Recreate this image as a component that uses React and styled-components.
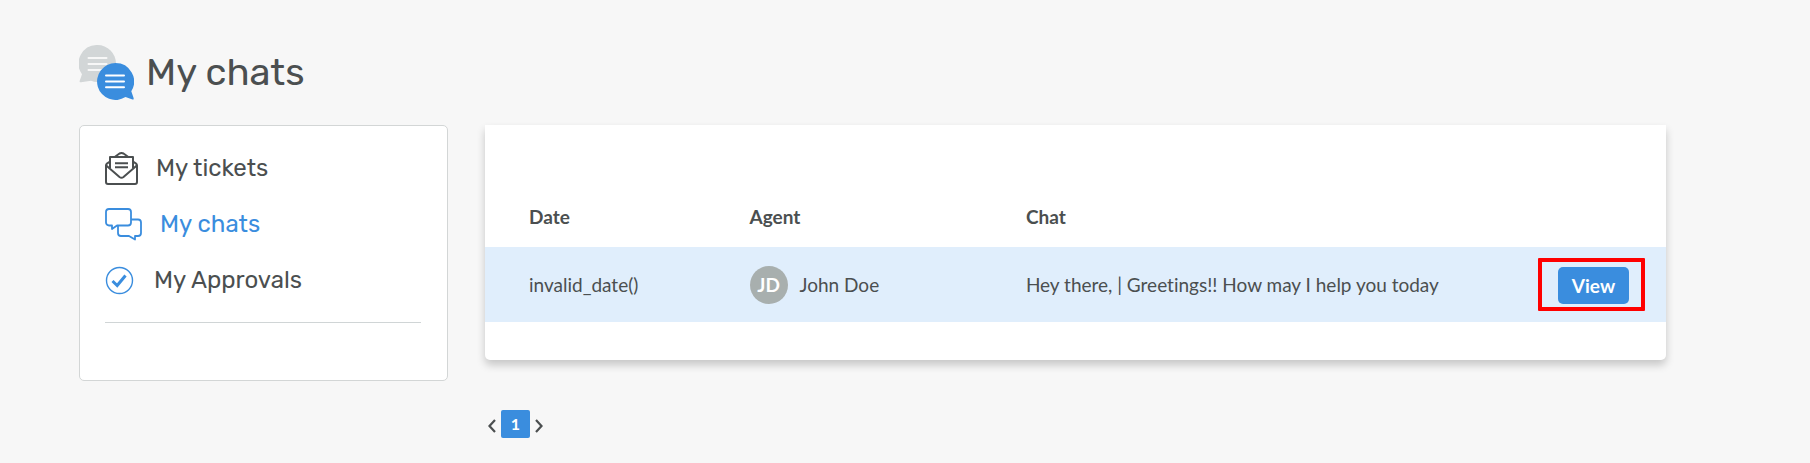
import React from "react";
import styled, { createGlobalStyle } from "styled-components";

const ink = "#4b4f50";
const blue = "#3a8dde";

const GlobalStyle = createGlobalStyle`
  *, *::before, *::after { box-sizing: border-box; }
  body {
    margin: 0;
    background: #f7f7f7;
    color: ${ink};
    font-family: Lato, sans-serif;
    font-size: 19px;
    line-height: 24px;
    font-variant-ligatures: none;
  }
`;

const Page = styled.div`
  padding: 45px 144px 24px 79px;
`;

const PageHeader = styled.header`
  display: flex;
  align-items: center;
  gap: 12px;
  margin-bottom: 25px;
`;

const Title = styled.h1`
  margin: 0;
  font: 400 38px/55px Rubik, Inter, sans-serif;
`;

const Columns = styled.div`
  display: grid;
  grid-template-columns: 369px minmax(0, 1fr);
  gap: 37px;
  align-items: start;
`;

const Sidebar = styled.nav`
  padding: 14px 26px 57px 25px;
  background: #fff;
  border: 1px solid #d3d6d6;
  border-radius: 5px;
`;

const Menu = styled.ul`
  margin: 0;
  padding: 0 0 14px;
  list-style: none;
  border-bottom: 1px solid #d0d5d6;
`;

const MenuLink = styled.a`
  display: flex;
  align-items: center;
  gap: 18px;
  height: 56px;
  color: ${(p) => (p.$active ? blue : ink)};
  font: 400 24px/28px Rubik, Inter, sans-serif;
  text-decoration: none;
`;

const Panel = styled.section`
  padding: 65px 0 38px;
  background: #fff;
  border-radius: 0 0 5px 5px;
  box-shadow: 0 5px 8px rgba(0, 0, 0, 0.2);
`;

const Table = styled.table`
  width: 100%;
  table-layout: fixed;
  border-collapse: collapse;
  text-align: left;
`;

const Head = styled.th`
  height: 57px;
  width: ${(p) => p.$width || "auto"};
  padding: 0 0 3px;
  font-weight: 700;

  &:first-child { padding-left: 44px; }
`;

const Row = styled.tr`
  background: #e0eefc;
`;

const Cell = styled.td`
  height: 75px;
  padding: 0;

  &:first-child { padding-left: 44px; }
`;

const ActionCell = styled(Cell)`
  padding: 2px 37px 0 0;
  text-align: right;
`;

const Agent = styled.div`
  display: flex;
  align-items: center;
  gap: 12px;
`;

const Avatar = styled.span`
  display: grid;
  place-items: center;
  width: 38px;
  height: 38px;
  border-radius: 50%;
  background: #a8afae;
  color: #fff;
  font-weight: 700;
`;

const Highlight = styled.span`
  position: relative;
  display: inline-block;
  vertical-align: middle;

  &::after {
    content: "";
    position: absolute;
    inset: -9px -16px -7px -20px;
    border: 4px solid #f00;
    border-radius: 1px;
    pointer-events: none;
  }
`;

const ViewButton = styled.button`
  display: block;
  width: 71px;
  height: 37px;
  padding: 0;
  border: 0;
  border-radius: 5px;
  background: ${blue};
  color: #fff;
  font: 700 19px/24px Lato, sans-serif;
`;

const Pagination = styled.nav`
  display: flex;
  align-items: center;
  gap: 5px;
  margin-top: 50px;
  padding-left: 3px;
`;

const Arrow = styled.button`
  display: flex;
  padding: 4px 0 0;
  border: 0;
  background: none;
  color: ${ink};
`;

const PageNumber = styled.button`
  width: 29px;
  height: 28px;
  padding: 0;
  border: 0;
  border-radius: 2px;
  background: ${blue};
  color: #fff;
  font: 700 16px/20px Lato, sans-serif;
`;

function HeaderIcon() {
  return (
    <svg width="55" height="55" viewBox="0 0 55 55" aria-hidden="true">
      <path
        d="M18.500 0a18.500 18.500 0 1 1 0 37q-3.500 0-6.500-1.200L2 37.300Q0 37.300 .8 35.500L3 29.200A18.500 18.500 0 0 1 18.500 0Z"
        fill="#d2d6d7"
      />
      <path d="M9.500 13h18M9.500 19h18M9.500 25h18" stroke="#f7f7f7" strokeWidth="2" strokeLinecap="round" />
      <path
        d="M36.500 18a18.500 18.500 0 0 1 15.800 28.200L54.600 53Q55 55 53.500 54.500L46.500 52.100A18.500 18.500 0 1 1 36.500 18Z"
        fill={blue}
      />
      <path d="M27 30.500h18M27 36.500h18M27 42.300h18" stroke="#fff" strokeWidth="2" strokeLinecap="round" />
    </svg>
  );
}

function TicketIcon() {
  return (
    <svg width="33" height="33" viewBox="0 0 33 33" fill="none" stroke="currentColor" strokeWidth="2" strokeLinejoin="round" aria-hidden="true">
      <path d="M5 9.500 1.900 11.600Q1 12.300 1 13.500V30a2 2 0 0 0 2 2h27a2 2 0 0 0 2-2V13.500q0-1.200-.9-1.900L28 9.500" />
      <path d="M5 16V5h23v11M10 4.800l4.500-3.300q2-1 4 0L23 4.800" />
      <path d="M1.200 13.500 14.500 25q2 1.500 4 0L31.800 13.500" />
      <path d="M10 11.300h13M10 15.300h13" />
    </svg>
  );
}

function ChatIcon() {
  return (
    <svg width="37" height="33" viewBox="0 0 37 33" fill="none" stroke="currentColor" strokeWidth="1.800" strokeLinejoin="round" aria-hidden="true">
      <path d="M4 1h19a3 3 0 0 1 3 3v10.500a3 3 0 0 1-3 3H12L7 21v-3.500H4a3 3 0 0 1-3-3V4a3 3 0 0 1 3-3Z" />
      <path d="M26 11.500h7a3 3 0 0 1 3 3V25a3 3 0 0 1-3 3h-3v3.500L24 28h-8a3 3 0 0 1-3-3v-7.500" />
    </svg>
  );
}

function ApprovalIcon() {
  return (
    <svg width="31" height="29" viewBox="0 0 31 29" fill="none" stroke={blue} aria-hidden="true">
      <circle cx="14.500" cy="14.500" r="13" strokeWidth="1.400" />
      <path d="m7.500 15 4.700 4.500L20.500 9.500" strokeWidth="3" />
    </svg>
  );
}

function Chevron({ d }) {
  return (
    <svg width="8" height="14" viewBox="0 0 8 14" fill="none" stroke="currentColor" strokeWidth="2.200" aria-hidden="true">
      <path d={d} />
    </svg>
  );
}

const links = [
  { label: "My tickets", Icon: TicketIcon },
  { label: "My chats", Icon: ChatIcon, active: true },
  { label: "My Approvals", Icon: ApprovalIcon },
];

const chats = [
  { date: "invalid_date()", initials: "JD", agent: "John Doe", text: "Hey there, | Greetings!! How may I help you today" },
];

export default function App() {
  return (
    <Page>
      <GlobalStyle />
      <PageHeader>
        <HeaderIcon />
        <Title>My chats</Title>
      </PageHeader>
      <Columns>
        <Sidebar>
          <Menu>
            {links.map(({ label, Icon, active }) => (
              <li key={label}>
                <MenuLink href="#" $active={active}>
                  <Icon />
                  {label}
                </MenuLink>
              </li>
            ))}
          </Menu>
        </Sidebar>
        <main>
          <Panel>
            <Table>
              <thead>
                <tr>
                  <Head $width="22.4%">Date</Head>
                  <Head $width="23.4%">Agent</Head>
                  <Head>Chat</Head>
                  <Head as="td" $width="128px" />
                </tr>
              </thead>
              <tbody>
                {chats.map((chat) => (
                  <Row key={chat.text}>
                    <Cell>{chat.date}</Cell>
                    <Cell>
                      <Agent>
                        <Avatar>{chat.initials}</Avatar>
                        {chat.agent}
                      </Agent>
                    </Cell>
                    <Cell>{chat.text}</Cell>
                    <ActionCell>
                      <Highlight>
                        <ViewButton type="button">View</ViewButton>
                      </Highlight>
                    </ActionCell>
                  </Row>
                ))}
              </tbody>
            </Table>
          </Panel>
          <Pagination>
            <Arrow type="button" aria-label="Previous page">
              <Chevron d="M7 1 1.500 7 7 13" />
            </Arrow>
            <PageNumber type="button">1</PageNumber>
            <Arrow type="button" aria-label="Next page">
              <Chevron d="m1 1 5.500 6L1 13" />
            </Arrow>
          </Pagination>
        </main>
      </Columns>
    </Page>
  );
}
